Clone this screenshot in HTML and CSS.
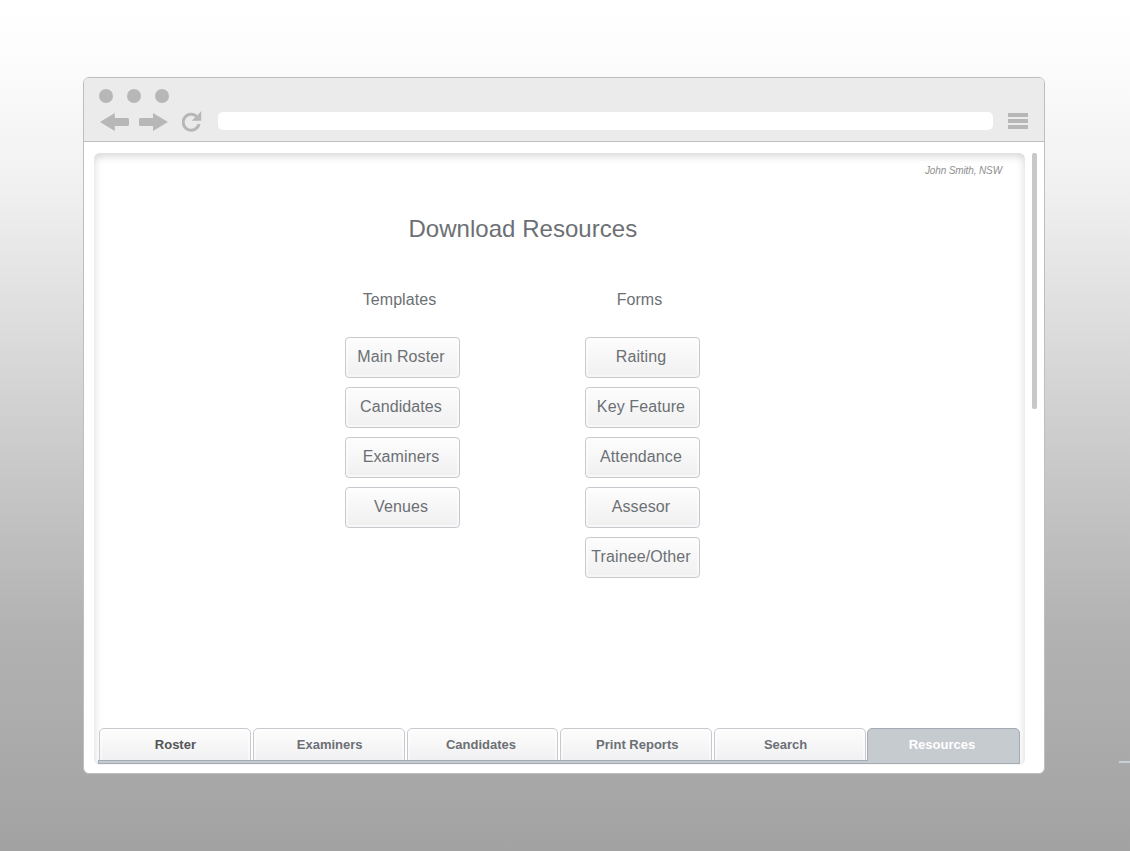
FILE: index.html
```html
<!DOCTYPE html>
<html lang="en">
<head>
<meta charset="utf-8">
<title>Download Resources</title>
<link rel="stylesheet" href="styles.css">
</head>
<body>
<div class="window">
  <header class="toolbar">
    <div class="dots"><i class="dot"></i><i class="dot"></i><i class="dot"></i></div>
    <div class="nav">
      <svg class="arrow" width="30" height="20" viewBox="0 0 30 20"><path d="M1 11 15.8 2V7H28.5Q30 7 30 8.5V13.5Q30 15 28.5 15H15.8V20Z"/></svg>
      <svg class="arrow forward" width="30" height="20" viewBox="0 0 30 20"><path d="M30 11 15 2V7H2.500Q1 7 1 8.500V13.500Q1 15 2.500 15H15V20Z"/></svg>
      <svg class="reload" width="20" height="21" viewBox="0 0 20 21"><path class="ring" d="M14.5 5.200A8 8 0 1 0 17 13"/><path d="M19.200 0V9.800H9.700L13 6.300 16 3.700Z"/></svg>
      <div class="address"></div>
      <div class="menu"><i></i><i></i><i></i></div>
    </div>
  </header>
  <div class="viewport">
    <main class="panel">
      <p class="user">John Smith, NSW</p>
      <h1>Download Resources</h1>
      <div class="columns">
        <section class="column">
          <h2>Templates</h2>
          <a class="button">Main Roster</a>
          <a class="button">Candidates</a>
          <a class="button">Examiners</a>
          <a class="button">Venues</a>
        </section>
        <section class="column">
          <h2>Forms</h2>
          <a class="button">Raiting</a>
          <a class="button">Key Feature</a>
          <a class="button">Attendance</a>
          <a class="button">Assesor</a>
          <a class="button">Trainee/Other</a>
        </section>
      </div>
      <nav class="tabs">
        <a class="tab first">Roster</a>
        <a class="tab examiners">Examiners</a>
        <a class="tab candidates">Candidates</a>
        <a class="tab reports">Print Reports</a>
        <a class="tab search">Search</a>
        <a class="tab active">Resources</a>
      </nav>
    </main>
    <div class="scrollbar"></div>
  </div>
</div>
<div class="edge-line"></div>
</body>
</html>
```
FILE: styles.css
```css
*, *::after { box-sizing: border-box; }
body {
  margin: 0;
  width: 1130px;
  height: 851px;
  padding: 77px 0 0 83px;
  overflow: hidden;
  position: relative;
  font-family: "Liberation Sans", Arial, sans-serif;
  color: #6c7074;
  background: linear-gradient(#fff 0, #fdfdfd 50px, #f0f0f0 190px, #d2d2d2 400px, #b2b2b2 630px, #aaa 750px, #a2a2a2 851px);
}
.window {
  width: 962px;
  height: 697px;
  border: 1px solid #bebebe;
  border-radius: 6px;
  background: #fff;
  overflow: hidden;
}
.toolbar {
  height: 64px;
  padding: 11px 16px 0 15px;
  background: #ebebeb;
  border-bottom: 1px solid #bebebe;
}
.dots { display: flex; gap: 14px; }
.dot { width: 14px; height: 14px; border-radius: 50%; background: #b7b7b7; }
.nav { display: flex; align-items: center; height: 20px; margin-top: 8px; }
.nav svg { flex: none; fill: #b7b7b7; }
.forward { margin-left: 9px; }
.reload { margin-left: 14px; }
.nav .ring { fill: none; stroke: #b7b7b7; stroke-width: 3; }
.address { width: 775px; height: 18px; margin-left: 16px; border-radius: 5px; background: #fff; }
.menu { display: flex; flex-direction: column; gap: 2px; width: 20px; margin-left: 15px; }
.menu i { height: 4px; background: #b7b7b7; }
.viewport { display: flex; gap: 7px; padding: 11px 0 0 10px; }
.panel {
  display: flex;
  flex-direction: column;
  width: 931px;
  height: 612px;
  padding: 11px 4px 1px;
  border-radius: 6px;
  box-shadow: inset 0 3px 8px rgba(0, 0, 0, .17);
}
.user { margin: 0 19px 0 0; text-align: right; font-size: 10px; font-style: italic; line-height: 13px; letter-spacing: -.12px; color: #8e8e8e; }
h1 { margin: 38px 0 0 310.5px; font-size: 24px; font-weight: 400; line-height: 28px; letter-spacing: .03px; }
.columns { display: flex; gap: 125px; margin: 47px 0 0 247px; }
.column { display: flex; flex-direction: column; gap: 9px; width: 115px; }
h2 { margin: 0 6px 18px 0; text-align: center; font-size: 16px; font-weight: 400; line-height: 20px; letter-spacing: .08px; }
.button {
  height: 41px;
  padding-right: 3px;
  border: 1px solid #c6cace;
  border-radius: 4px;
  background: linear-gradient(#fdfdfd, #f0f0f1);
  box-shadow: inset 0 0 0 2px rgba(255, 255, 255, .45);
  font-size: 16px;
  line-height: 38px;
  letter-spacing: .1px;
  text-align: center;
  white-space: nowrap;
}
.tabs { display: flex; gap: 2px; height: 36px; margin-top: auto; padding-left: 1px; position: relative; }
.tabs::after { content: ""; position: absolute; left: 0; bottom: 0; width: 770px; height: 4px; background: #c6cbd0; border: 1px solid #a3abb7; border-right: 0; }
.tab {
  flex: none;
  width: 151.8px;
  height: 36px;
  border: 1px solid #c6cace;
  border-radius: 5px 5px 0 0;
  background: linear-gradient(#fdfdfd, #f0f0f2 32px);
  box-shadow: inset 0 0 0 2px rgba(255, 255, 255, .45);
  font-size: 13px;
  font-weight: 700;
  line-height: 32px;
  text-align: center;
}
.first { color: #555; padding-left: 1px; }
.examiners { padding-left: 2px; }
.candidates { padding-right: 3px; }
.reports { padding-left: 2px; }
.search { padding-right: 9px; }
.active { width: 153px; margin-left: -1px; color: #fff; background: #c6cbd0; border-color: #a3abb7; box-shadow: none; padding-right: 3px; }
.scrollbar { width: 5px; height: 256px; border-radius: 2px; background: #c8c8c8; }
.edge-line { position: absolute; right: 0; top: 761px; width: 11px; height: 2px; background: #c6d0d8; }
```
